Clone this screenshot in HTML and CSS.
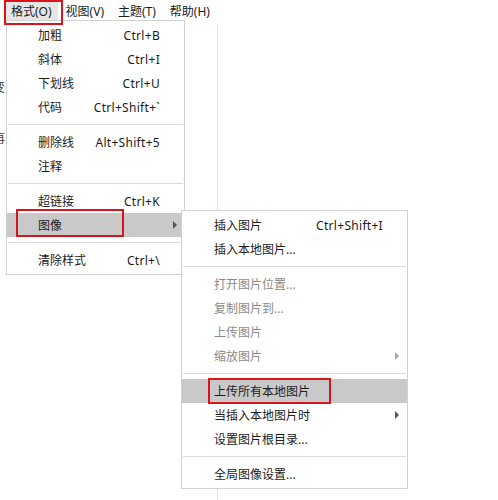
FILE: index.html
```
<!DOCTYPE html>
<html>
<head>
<meta charset="utf-8">
<link rel="stylesheet" href="styles.css">
</head>
<body>
<div class="menubar">
  <div class="mb-item active">格式(O)</div>
  <div class="mb-item">视图(V)</div>
  <div class="mb-item">主题(T)</div>
  <div class="mb-item">帮助(H)</div>
</div>
<div class="canvas">
  <div class="bg-line"></div>
  <div class="bg-text t1">变</div>
  <div class="bg-text t2">再</div>
</div>

<div class="menu main">
  <div class="row"><span class="lbl">加粗</span><span class="sc">Ctrl+B</span></div>
  <div class="row"><span class="lbl">斜体</span><span class="sc">Ctrl+I</span></div>
  <div class="row"><span class="lbl">下划线</span><span class="sc">Ctrl+U</span></div>
  <div class="row"><span class="lbl">代码</span><span class="sc">Ctrl+Shift+`</span></div>
  <div class="sep"></div>
  <div class="row"><span class="lbl">删除线</span><span class="sc">Alt+Shift+5</span></div>
  <div class="row"><span class="lbl">注释</span></div>
  <div class="sep"></div>
  <div class="row"><span class="lbl">超链接</span><span class="sc">Ctrl+K</span></div>
  <div class="row hl"><span class="lbl">图像</span><span class="arrow"></span></div>
  <div class="sep"></div>
  <div class="row"><span class="lbl">清除样式</span><span class="sc">Ctrl+\</span></div>
</div>

<div class="menu sub">
  <div class="row"><span class="lbl">插入图片</span><span class="sc">Ctrl+Shift+I</span></div>
  <div class="row"><span class="lbl">插入本地图片...</span></div>
  <div class="sep"></div>
  <div class="row dis"><span class="lbl">打开图片位置...</span></div>
  <div class="row dis"><span class="lbl">复制图片到...</span></div>
  <div class="row dis"><span class="lbl">上传图片</span></div>
  <div class="row dis"><span class="lbl">缩放图片</span><span class="arrow"></span></div>
  <div class="sep"></div>
  <div class="row hl"><span class="lbl">上传所有本地图片</span></div>
  <div class="row"><span class="lbl">当插入本地图片时</span><span class="arrow"></span></div>
  <div class="row"><span class="lbl">设置图片根目录...</span></div>
  <div class="sep"></div>
  <div class="row"><span class="lbl">全局图像设置...</span></div>
</div>

<div class="redbox rb1"></div>
<div class="redbox rb2"></div>
<div class="redbox rb3"></div>
</body>
</html>
```
FILE: styles.css
```
* { box-sizing: border-box; }
html, body {
  margin: 0;
  padding: 0;
  background: #ffffff;
  width: 498px;
  height: 500px;
  overflow: hidden;
  font-family: "Noto Sans", "Noto Sans CJK SC", sans-serif;
  font-size: 12px;
  color: #1b1b1b;
}
.menubar {
  display: flex;
  height: 24px;
  align-items: stretch;
  padding-left: 5px;
  gap: 2px;
}
.mb-item {
  display: flex;
  align-items: center;
  padding: 0 6px;
  white-space: nowrap;
  line-height: 1;
}
.mb-item.active {
  background: #e6e6e6;
}
.canvas {
  position: relative;
  height: 476px;
}
.bg-line {
  position: absolute;
  left: 217px;
  top: 0;
  bottom: 0;
  width: 1px;
  background: #e3e3e3;
}
.bg-text {
  position: absolute;
  left: -7px;
  font-size: 12px;
  color: #333;
}
.t1 { top: 54px; }
.t2 { top: 105px; }

.menu {
  position: absolute;
  background: #ffffff;
  border: 1px solid #d2d2d2;
  padding: 2px 0;
}
.menu.main {
  left: 6px;
  top: 20px;
  width: 179px;
}
.menu.sub {
  left: 181px;
  top: 210px;
  width: 227px;
}
.row {
  position: relative;
  height: 24px;
  display: flex;
  align-items: center;
  white-space: nowrap;
}
.main .row { padding: 0 24px 0 31px; }
.sub .row { padding: 0 24px 0 32px; }
.row .lbl { flex: 1; }
.row .sc { text-align: right; letter-spacing: 0.3px; }
.row.hl { background: #c9c9c9; }
.row.dis { color: #8a8a8a; }
.arrow {
  position: absolute;
  right: 7px;
  top: 8px;
  width: 0;
  height: 0;
  border-top: 4px solid transparent;
  border-bottom: 4px solid transparent;
  border-left: 4px solid #555555;
}
.sub .arrow { right: 8px; }
.row.dis .arrow { border-left-color: #a8a8a8; }
.sep {
  height: 11px;
  position: relative;
}
.sep::after {
  content: "";
  position: absolute;
  left: 1px;
  right: 1px;
  top: 5px;
  height: 1px;
  background: #dadada;
}
.redbox {
  position: absolute;
  border: 2px solid #d9141c;
}
.rb1 { left: 4px; top: 0; width: 59px; height: 25px; }
.rb2 { left: 16px; top: 209px; width: 108px; height: 28px; }
.rb3 { left: 208px; top: 378px; width: 123px; height: 26px; }
```
